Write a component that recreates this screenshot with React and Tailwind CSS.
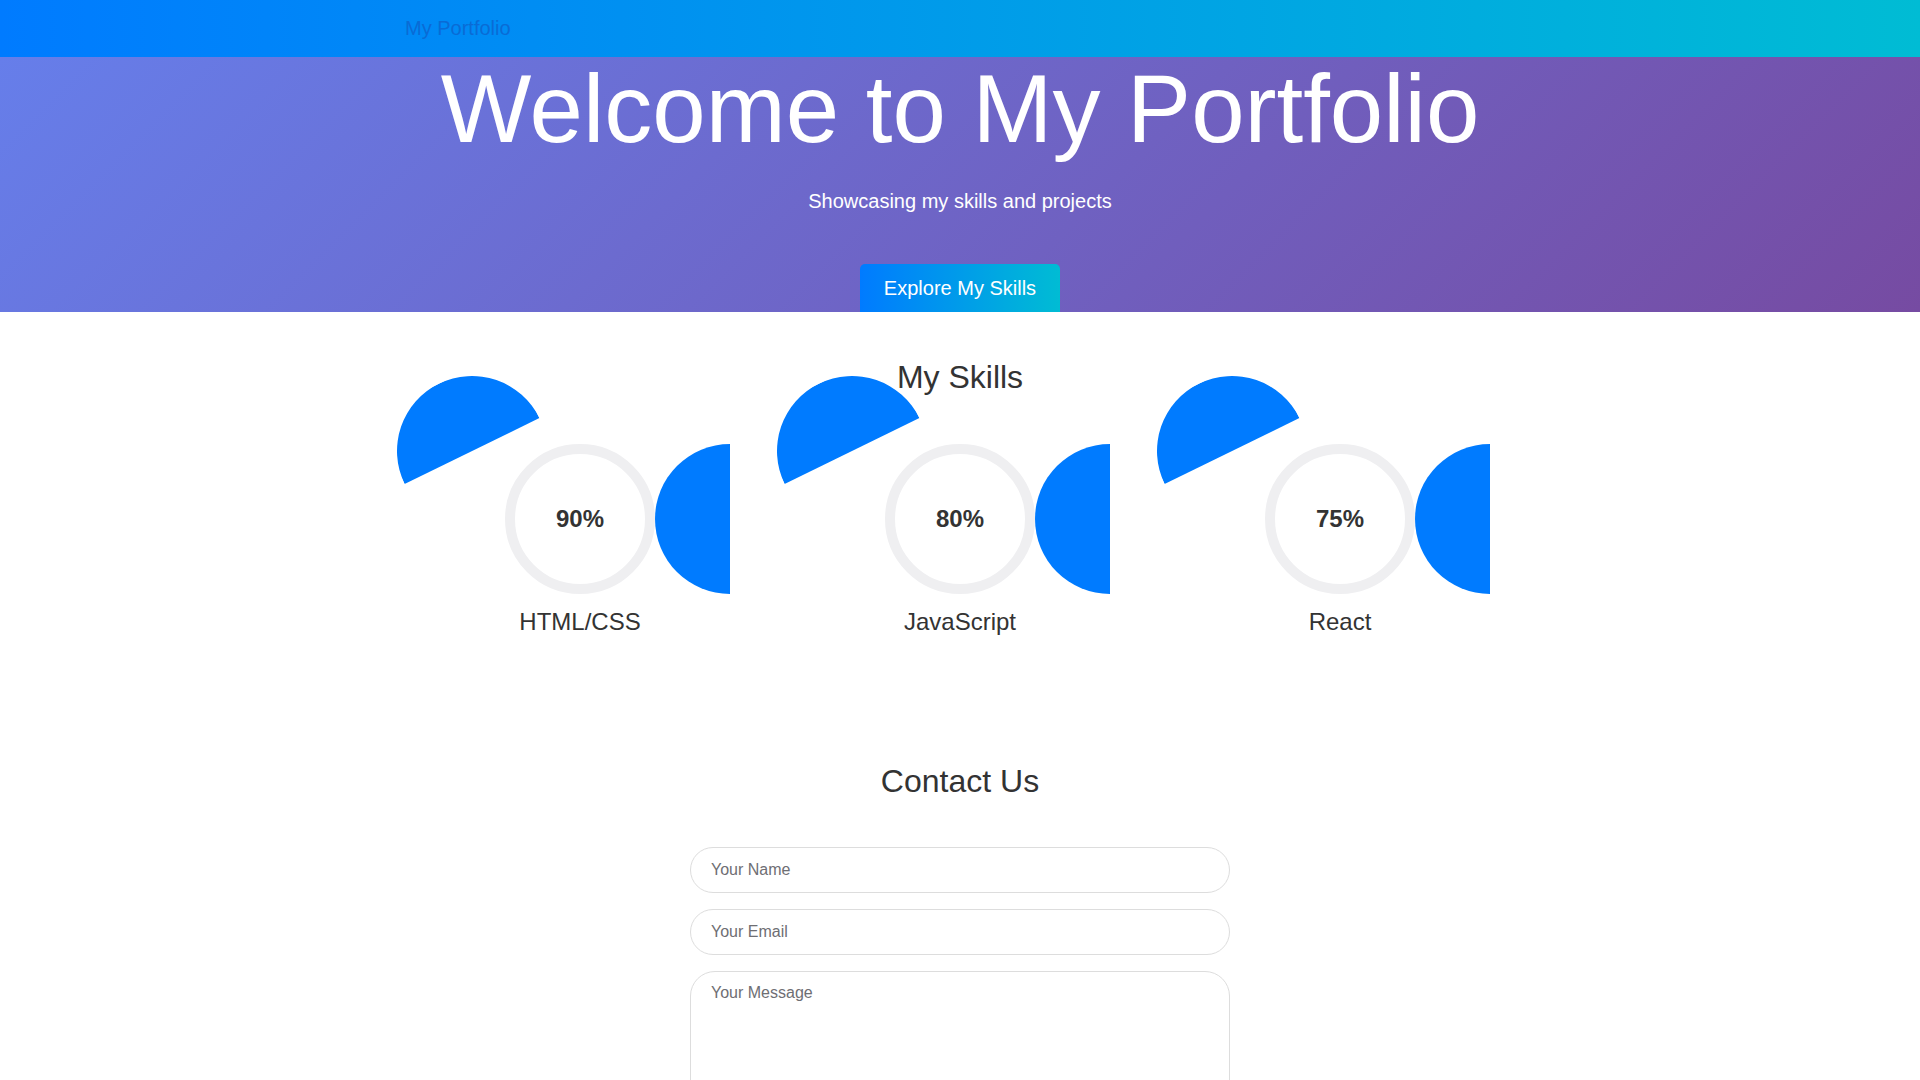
import React from 'react'

const skills = [
  { name: 'HTML/CSS', value: 90 },
  { name: 'JavaScript', value: 80 },
  { name: 'React', value: 75 },
]

function SkillCircle({ name, value }) {
  return (
    <div className="flex flex-col items-center">
      <div className="relative w-[150px] h-[150px]">
        {/* left half, rotated */}
        <div className="absolute left-[-108px] top-[-68px] w-[150px] h-[150px] rounded-full bg-[#007bff] [clip-path:inset(0_50%_0_0)] rotate-[64deg]" />
        {/* right half */}
        <div className="absolute left-[150px] top-0 w-[75px] h-[150px] rounded-l-full bg-[#007bff]" />
        <div className="w-full h-full rounded-full border-[10px] border-[#efeff1] flex items-center justify-center">
          <span className="text-[24px] leading-[1.2] font-bold text-[#333]">{value}%</span>
        </div>
      </div>
      <h3 className="mt-[14px] text-[24px] leading-[1.2] text-[#333]">{name}</h3>
    </div>
  )
}

export default function App() {
  return (
    <div className="min-h-screen bg-white font-['Liberation_Sans',Arial,sans-serif] text-[#333]">
      <nav className="h-[57px] bg-[linear-gradient(90deg,#007bff,#00bcd4)]">
        <div className="w-[1140px] mx-auto px-[15px] pb-[2px] h-full flex items-center">
          <span className="text-[20px] leading-[30px] text-[#0a6bd5]">My Portfolio</span>
        </div>
      </nav>

      <header className="h-[255px] bg-[linear-gradient(135deg,#667eea_0%,#764ba2_100%)] text-white text-center">
        <h1 className="text-[96px] leading-[104px]">Welcome to My Portfolio</h1>
        <p className="mt-[26px] text-[20px] leading-[28px]">Showcasing my skills and projects</p>
        <button className="mt-[49px] px-6 py-3 text-[20px] leading-6 text-white rounded-t-[5px] bg-[linear-gradient(90deg,#007bff,#00bcd4)]">
          Explore My Skills
        </button>
      </header>

      <section className="pt-[46px] pb-[50px]">
        <h2 className="text-center text-[32px] leading-[1.2] text-[#333]">My Skills</h2>
        <div className="w-[1140px] mx-auto mt-12 grid grid-cols-3">
          {skills.map((s) => (
            <SkillCircle key={s.name} name={s.name} value={s.value} />
          ))}
        </div>
      </section>

      <section className="pt-[75px] pb-[50px]">
        <h2 className="text-center text-[32px] leading-[1.2] text-[#333]">Contact Us</h2>
        <form className="w-[540px] mx-auto mt-[46px] flex flex-col">
          <input
            type="text"
            placeholder="Your Name"
            className="h-[46px] mb-[16px] px-[20px] border border-[#ddd] rounded-[25px] text-[16px] text-[#333] placeholder:text-[#6e6e73] outline-none"
          />
          <input
            type="email"
            placeholder="Your Email"
            className="h-[46px] mb-[16px] px-[20px] border border-[#ddd] rounded-[25px] text-[16px] text-[#333] placeholder:text-[#6e6e73] outline-none"
          />
          <textarea
            placeholder="Your Message"
            className="h-[150px] px-[20px] pt-[12px] leading-[1.15] border border-[#ddd] rounded-[25px] text-[16px] text-[#333] placeholder:text-[#6e6e73] outline-none resize-none"
          />
        </form>
      </section>
    </div>
  )
}
